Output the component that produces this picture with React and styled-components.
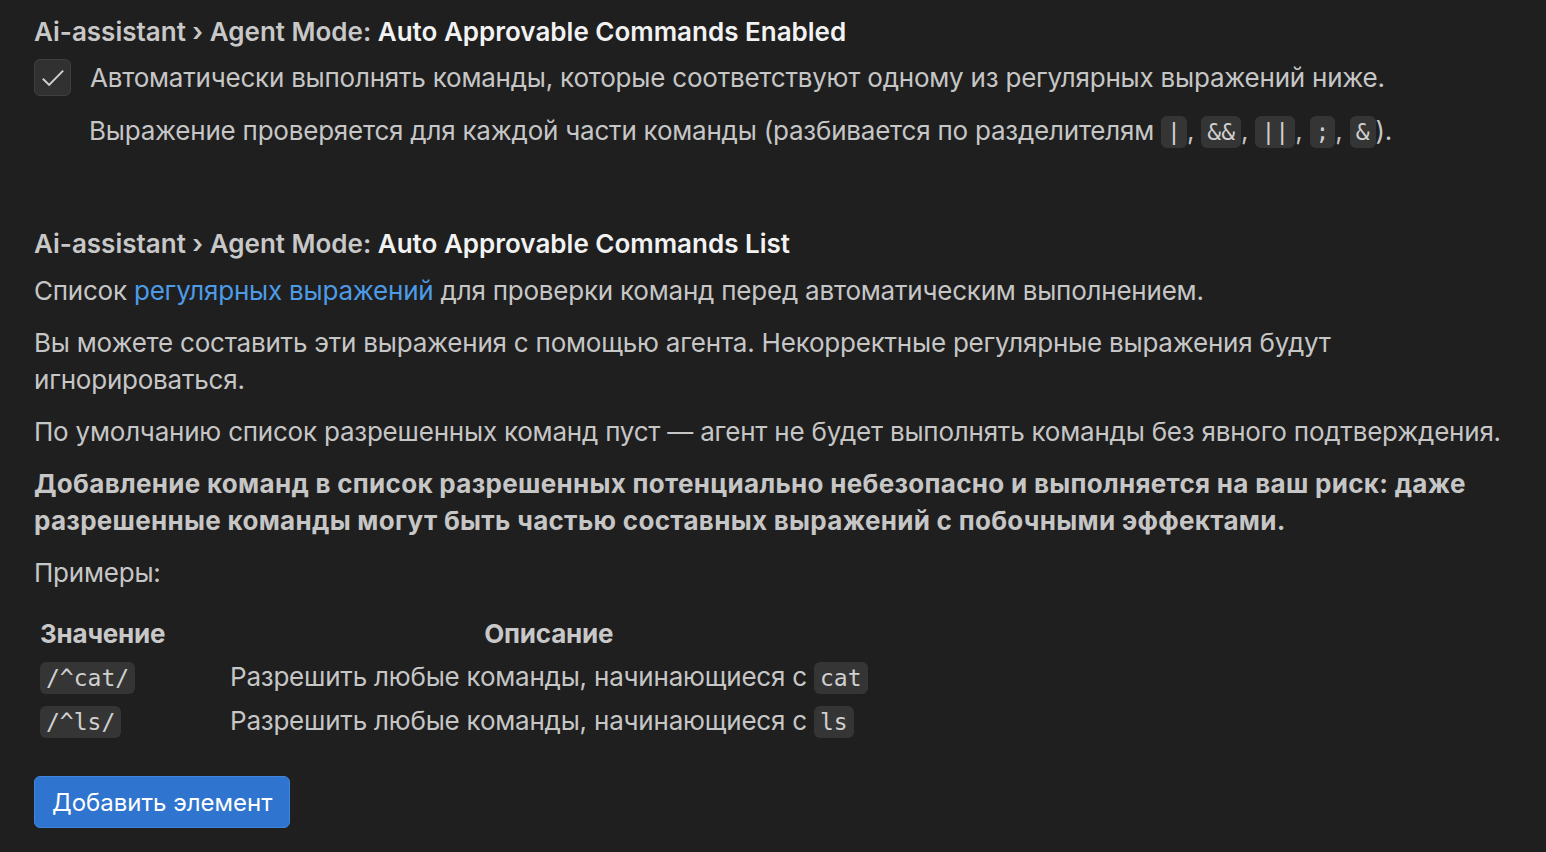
import React from "react";
import styled, { createGlobalStyle } from "styled-components";

const Global = createGlobalStyle`
  html, body { margin: 0; padding: 0; background: #1f1f1f; }
  body { font-family: Inter, "Noto Sans", sans-serif; }
`;

const Page = styled.div`
  width: 1546px;
  height: 852px;
  box-sizing: border-box;
  padding: 13px 0 0 34px;
  background: #1f1f1f;
  color: #c6c6c6;
  font-size: 26px;
  line-height: 37px;
  letter-spacing: -0.22px;
  overflow: hidden;
`;

const Setting = styled.section`
  display: flex;
  flex-direction: column;
  margin-bottom: ${(p) => p.$gap ?? 0}px;
`;

const Title = styled.div`
  font-weight: 600;
  color: #c8c8c8;
  line-height: 37px;
  margin-bottom: 9px;
  letter-spacing: 0;
`;

const Key = styled.span`
  color: #f2f2f2;
`;

const CheckRow = styled.label`
  display: flex;
  align-items: center;
  gap: 19px;
`;

const Box = styled.span`
  width: 35px;
  height: 35px;
  border-radius: 6px;
  border: 1px solid #3f3f3f;
  background: #313131;
  display: flex;
  align-items: center;
  justify-content: center;
  flex-shrink: 0;
`;

const Desc = styled.p`
  margin: ${(p) => p.$top ?? 15}px 0 0 ${(p) => p.$indent ?? 0}px;
  font-weight: ${(p) => (p.$bold ? 700 : 400)};
  letter-spacing: ${(p) => (p.$bold ? "0.3px" : "inherit")};
`;

const Code = styled.code`
  font-family: "DejaVu Sans Mono", "Liberation Mono", monospace;
  font-size: 23px;
  letter-spacing: 0;
  background: #353535;
  color: #d0d0d0;
  border-radius: 6px;
  padding: 3px 6px;
`;

const Link = styled.a`
  color: #4d9be6;
  text-decoration: none;
`;

const Table = styled.table`
  align-self: flex-start;
  border-collapse: collapse;
  margin-top: 20px;
  th, td { padding: 0 6px; text-align: left; height: 44px; }
  th { font-weight: 700; color: #c8c8c8; }
  th:nth-child(2) { text-align: center; }
  td:first-child { width: 178px; }
`;

const Button = styled.button`
  margin-top: 33px;
  align-self: flex-start;
  height: 52px;
  padding: 0 17px;
  border: 1px solid #3d86dc;
  border-radius: 6px;
  background: #2f74ce;
  color: #ffffff;
  font-family: inherit;
  font-size: 24px;
`;

export default function App() {
  return (
    <Page>
      <Global />
      <Setting $gap={74}>
        <Title>
          Ai-assistant › Agent Mode: <Key>Auto Approvable Commands Enabled</Key>
        </Title>
        <CheckRow>
          <Box>
            <svg width="28" height="28" viewBox="0 0 16 16" fill="none">
              <path d="M2.2 8.4l3.6 3.6 8-8.2" stroke="#d0d0d0" strokeWidth="1.1" />
            </svg>
          </Box>
          Автоматически выполнять команды, которые соответствуют одному из регулярных выражений ниже.
        </CheckRow>
        <Desc $indent={55} $top={16}>
          Выражение проверяется для каждой части команды (разбивается по разделителям <Code>|</Code>,{" "}
          <Code>&amp;&amp;</Code>, <Code>||</Code>, <Code>;</Code>, <Code>&amp;</Code>).
        </Desc>
      </Setting>
      <Setting>
        <Title>
          Ai-assistant › Agent Mode: <Key>Auto Approvable Commands List</Key>
        </Title>
        <Desc $top={1}>
          Список <Link>регулярных выражений</Link> для проверки команд перед автоматическим выполнением.
        </Desc>
        <Desc>
          Вы можете составить эти выражения с помощью агента. Некорректные регулярные выражения будут
          <br />
          игнорироваться.
        </Desc>
        <Desc>
          По умолчанию список разрешенных команд пуст — агент не будет выполнять команды без явного подтверждения.
        </Desc>
        <Desc $bold>
          Добавление команд в список разрешенных потенциально небезопасно и выполняется на ваш риск: даже
          <br />
          разрешенные команды могут быть частью составных выражений с побочными эффектами.
        </Desc>
        <Desc>Примеры:</Desc>
        <Table>
          <thead>
            <tr>
              <th>Значение</th>
              <th>Описание</th>
            </tr>
          </thead>
          <tbody>
            <tr>
              <td><Code>/^cat/</Code></td>
              <td>Разрешить любые команды, начинающиеся с <Code>cat</Code></td>
            </tr>
            <tr>
              <td><Code>/^ls/</Code></td>
              <td>Разрешить любые команды, начинающиеся с <Code>ls</Code></td>
            </tr>
          </tbody>
        </Table>
        <Button>Добавить элемент</Button>
      </Setting>
    </Page>
  );
}
